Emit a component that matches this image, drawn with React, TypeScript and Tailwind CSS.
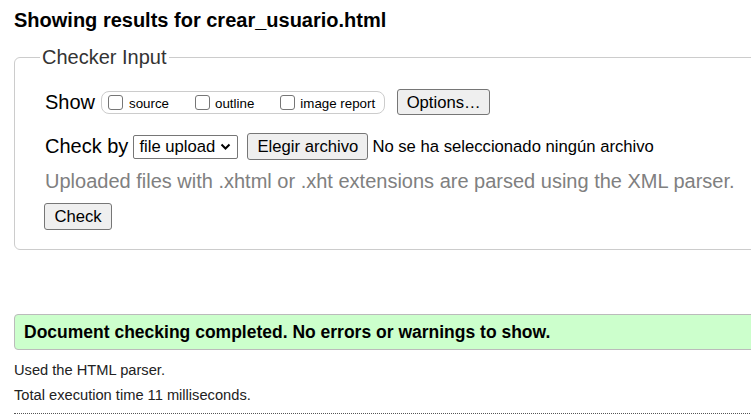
import React from 'react';

const font = { fontFamily: '"Liberation Sans", Arial, sans-serif' };

const Box = () => (
  <span className="inline-block w-[15px] h-[15px] border border-[#767676] rounded-[3px] bg-white shrink-0" />
);

const Btn: React.FC<{ children: React.ReactNode; className?: string }> = ({ children, className }) => (
  <button
    type="button"
    className={`bg-[#efefef] border border-[#767676] rounded-[3px] text-[16.67px] leading-[19px] text-black ${className || ''}`}
  >
    {children}
  </button>
);

export default function App() {
  return (
    <div className="w-[751px] h-[414px] overflow-hidden bg-white text-black" style={font}>
      <div className="w-[820px] pl-[14px]">
        <h2 className="mt-[9px] text-[20px] leading-[23px] font-bold">Showing results for crear_usuario.html</h2>

        {/* checker form */}
        <fieldset className="mt-[14px] border border-[#cccccc] rounded-[6px] pl-[30px] pb-[19px]">
          <legend className="-ml-[5px] px-[2px] text-[20px] leading-[23px] text-[#333]">Checker Input</legend>

          <div className="flex items-center mt-[20px] h-[26px]">
            <span className="text-[20px] leading-[23px]">Show</span>
            <div className="ml-[6px] flex items-center h-[23px] border border-[#cccccc] rounded-[8px] pl-[6px] pr-[9px] text-[13.33px] leading-[16px]">
              <Box />
              <span className="ml-[6px] mt-[3px]">source</span>
              <span className="ml-[26px] flex"><Box /></span>
              <span className="ml-[5px] mt-[3px]">outline</span>
              <span className="ml-[26px] flex"><Box /></span>
              <span className="ml-[5px] mt-[3px]">image report</span>
            </div>
            <Btn className="ml-[12px] h-[26px] w-[93px]">Options…</Btn>
          </div>

          <div className="flex items-center mt-[18px] h-[27px]">
            <span className="text-[20px] leading-[23px]">Check by</span>
            <div className="ml-[5px] flex items-center justify-between h-[24px] w-[105px] border border-[#767676] rounded-[2px] pl-[5px] pr-[6px] text-[16.67px] leading-[19px]">
              <span>file upload</span>
              <svg width="11" height="8" viewBox="0 0 11 8" fill="none">
                <path d="M1.5 1.5 L5.5 5.5 L9.5 1.5" stroke="#000" strokeWidth="2" />
              </svg>
            </div>
            <Btn className="ml-[9px] h-[27px] w-[121px]">Elegir archivo</Btn>
            <span className="ml-[4px] text-[16.67px] leading-[19px]">No se ha seleccionado ningún archivo</span>
          </div>

          <p className="mt-[10px] text-[20px] leading-[23px] text-[#808080]">
            Uploaded files with .xhtml or .xht extensions are parsed using the XML parser.
          </p>

          <Btn className="mt-[10px] -ml-[1px] h-[27px] w-[68px] block">Check</Btn>
        </fieldset>

        <div className="mt-[64px] h-[36px] border border-[#bbbbbb] rounded-[4px] bg-[#ccffcc] pl-[9px] py-[7px]">
          <p className="text-[17.5px] leading-[20px] font-bold">Document checking completed. No errors or warnings to show.</p>
        </div>

        <p className="mt-[12px] text-[14.67px] leading-[17px] text-[#222]">Used the HTML parser.</p>
        <p className="mt-[8px] text-[14.67px] leading-[17px] text-[#222]">Total execution time 11 milliseconds.</p>
        <div className="mt-[9px] border-t border-dotted border-[#555]" />
      </div>
    </div>
  );
}
